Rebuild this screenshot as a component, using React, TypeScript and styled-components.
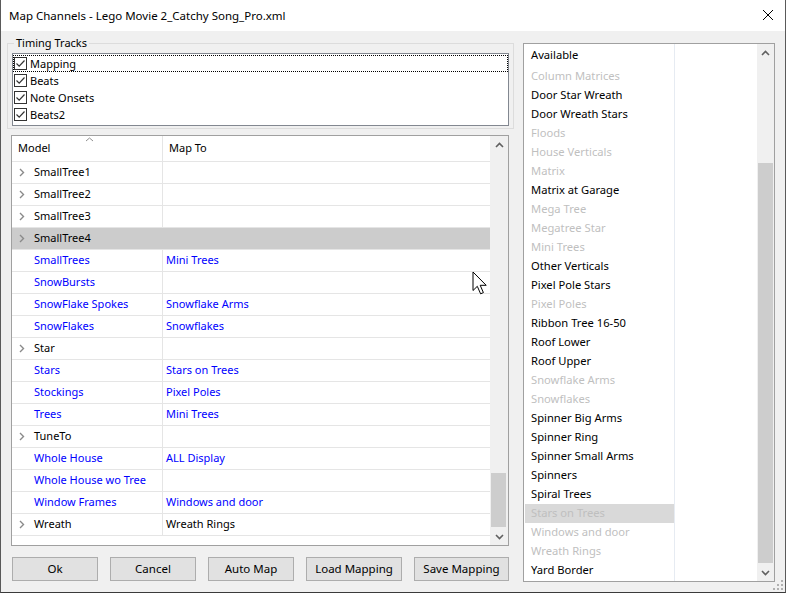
import React from "react";
import styled, { createGlobalStyle } from "styled-components";

const FONT = `"Noto Sans", "Segoe UI", sans-serif`;

const Global = createGlobalStyle`
  html, body { margin: 0; padding: 0; background: #f0f0f0; }
  body { font-family: ${FONT}; font-size: 11px; color: #000; }
  * { box-sizing: border-box; }
`;

const Window = styled.div`
  position: relative;
  width: 786px;
  height: 593px;
  background: #f0f0f0;
  display: flex;
  flex-direction: column;
  border-left: 1px solid #5a5a5a;
  border-right: 1px solid #5a5a5a;
  border-bottom: 1px solid #3a3a3a;
  overflow: hidden;
`;

const TitleBar = styled.div`
  height: 31px;
  flex: none;
  background: #fff;
  display: flex;
  align-items: center;
  justify-content: space-between;
  padding: 0 9px 1px 8px;
  font-size: 11.5px;
`;

const CloseBtn = styled.div`
  width: 12px;
  height: 12px;
  margin-right: 2px;
  display: flex;
`;

const Body = styled.div`
  flex: 1;
  display: flex;
  gap: 9px;
  padding-left: 6px;
`;

const LeftCol = styled.div`
  width: 507px;
  display: flex;
  flex-direction: column;
`;

const GroupBox = styled.div`
  position: relative;
  margin-top: 12px;
  height: 86px;
  border: 1px solid #dcdcdc;
  padding: 9px 4px 0 4px;
`;

const Legend = styled.span`
  position: absolute;
  top: -9px;
  left: 6px;
  padding: 0 2px;
  background: #f0f0f0;
  line-height: 16px;
  font-size: 11px;
`;

const TrackList = styled.div`
  height: 73px;
  background: #fff;
  border: 1px solid #828790;
  padding-top: 1px;
`;

const TrackRow = styled.div<{ $focus?: boolean }>`
  height: 17px;
  display: flex;
  align-items: center;
  gap: 3px;
  padding-left: 1px;
  outline: ${(p) => (p.$focus ? "1px dotted #000" : "none")};
  outline-offset: -1px;
`;

const CheckBox = styled.span`
  width: 13px;
  height: 13px;
  border: 1px solid #333;
  background: #fff;
  display: flex;
  align-items: center;
  justify-content: center;
  flex: none;
`;

const Table = styled.div`
  margin: 6px 0 0 4px;
  width: 498px;
  height: 411px;
  border: 1px solid #a0a0a0;
  background: #fff;
  display: flex;
  overflow: hidden;
`;

const TableMain = styled.div`
  width: 478px;
  display: flex;
  flex-direction: column;
`;

const HeaderRow = styled.div`
  position: relative;
  height: 26px;
  display: grid;
  grid-template-columns: 151px 1fr;
  border-bottom: 1px solid #e5e5e5;
  flex: none;
`;

const HeaderCell = styled.div<{ $pad: number; $divider?: boolean }>`
  display: flex;
  align-items: center;
  padding-left: ${(p) => p.$pad}px;
  padding-bottom: 2px;
  border-right: ${(p) => (p.$divider ? "1px solid #e5e5e5" : "none")};
`;

const SortArrow = styled.span`
  position: absolute;
  left: 73px;
  top: 1px;
  display: flex;
`;

const Row = styled.div<{ $selected?: boolean }>`
  height: 22px;
  display: grid;
  grid-template-columns: 151px 1fr;
  border-bottom: 1px solid #e5e5e5;
  background: ${(p) => (p.$selected ? "#cccccc" : "#fff")};
  flex: none;
`;

const Cell = styled.div<{ $pad: number; $blue?: boolean; $divider?: boolean }>`
  position: relative;
  display: flex;
  align-items: center;
  padding-left: ${(p) => p.$pad}px;
  padding-bottom: 2px;
  color: ${(p) => (p.$blue ? "#0000ff" : "#000")};
  border-right: ${(p) => (p.$divider ? "1px solid #e5e5e5" : "none")};
  white-space: nowrap;
`;

const Expander = styled.span`
  position: absolute;
  left: 7px;
  top: 6px;
  display: flex;
`;

const VScroll = styled.div<{ $thumbTop: number; $thumbHeight: number; $thumbWidth: number }>`
  position: relative;
  flex: 1;
  background: #f0f0f0;
  display: flex;
  flex-direction: column;
  justify-content: space-between;
  align-items: center;
  &::after {
    content: "";
    position: absolute;
    left: 1px;
    width: ${(p) => p.$thumbWidth}px;
    top: ${(p) => p.$thumbTop}px;
    height: ${(p) => p.$thumbHeight}px;
    background: #cdcdcd;
  }
`;

const ArrowBox = styled.div`
  height: 17px;
  display: flex;
  align-items: center;
  justify-content: center;
  width: 100%;
  position: relative;
  z-index: 1;
`;

const ButtonRow = styled.div`
  margin: 11px 0 0 5px;
  display: flex;
  gap: 12px;
`;

const Button = styled.div<{ $w: number }>`
  width: ${(p) => p.$w}px;
  height: 24px;
  background: #e1e1e1;
  border: 1px solid #adadad;
  display: flex;
  align-items: center;
  justify-content: center;
  font-size: 11.5px;
  padding-bottom: 1px;
`;

const RightList = styled.div`
  margin-top: 12px;
  width: 252px;
  height: 539px;
  border: 1px solid #a0a0a0;
  background: #fff;
  display: flex;
`;

const ListContent = styled.div`
  width: 233px;
  display: flex;
`;

const ListColumn = styled.div`
  width: 151px;
  border-right: 1px solid #e6ebf2;
  padding-left: 1px;
  display: flex;
  flex-direction: column;
`;

const ListHeader = styled.div`
  height: 23px;
  display: flex;
  align-items: center;
  padding: 0 0 2px 6px;
  font-size: 11.2px;
`;

const ListItem = styled.div<{ $disabled?: boolean; $selected?: boolean }>`
  height: 19px;
  display: flex;
  align-items: center;
  padding: 0 0 2px 6px;
  font-size: 11.2px;
  white-space: nowrap;
  color: ${(p) => (p.$disabled ? "#bfbfbf" : "#000")};
  background: ${(p) => (p.$selected ? "#d9d9d9" : "transparent")};
`;

const Cursor = styled.svg`
  position: absolute;
  left: 471px;
  top: 271px;
`;

const Grip = styled.svg`
  position: absolute;
  right: 2px;
  bottom: 2px;
`;

const Check = () => (
  <svg width="11" height="11" viewBox="0 0 11 11">
    <path d="M1.5 5.5 L4.2 8.2 L9.5 2.5" fill="none" stroke="#333" strokeWidth="1.2" />
  </svg>
);

const Chevron = () => (
  <svg width="6" height="9" viewBox="0 0 6 9">
    <path d="M1 1 L4.5 4.5 L1 8" fill="none" stroke="#8a8a8a" strokeWidth="1.4" />
  </svg>
);

const ArrowUp = () => (
  <svg width="9" height="6" viewBox="0 0 9 6">
    <path d="M1 5 L4.5 1.5 L8 5" fill="none" stroke="#606060" strokeWidth="1.6" />
  </svg>
);

const ArrowDown = () => (
  <svg width="9" height="6" viewBox="0 0 9 6">
    <path d="M1 1 L4.5 4.5 L8 1" fill="none" stroke="#606060" strokeWidth="1.6" />
  </svg>
);

type MapRow = { model: string; to: string; expand?: boolean; blue?: boolean; selected?: boolean };

const rows: MapRow[] = [
  { model: "SmallTree1", to: "", expand: true },
  { model: "SmallTree2", to: "", expand: true },
  { model: "SmallTree3", to: "", expand: true },
  { model: "SmallTree4", to: "", expand: true, selected: true },
  { model: "SmallTrees", to: "Mini Trees", blue: true },
  { model: "SnowBursts", to: "", blue: true },
  { model: "SnowFlake Spokes", to: "Snowflake Arms", blue: true },
  { model: "SnowFlakes", to: "Snowflakes", blue: true },
  { model: "Star", to: "", expand: true },
  { model: "Stars", to: "Stars on Trees", blue: true },
  { model: "Stockings", to: "Pixel Poles", blue: true },
  { model: "Trees", to: "Mini Trees", blue: true },
  { model: "TuneTo", to: "", expand: true },
  { model: "Whole House", to: "ALL Display", blue: true },
  { model: "Whole House wo Tree", to: "", blue: true },
  { model: "Window Frames", to: "Windows and door", blue: true },
  { model: "Wreath", to: "Wreath Rings", expand: true },
];

const available: [string, boolean][] = [
  ["Column Matrices", false],
  ["Door Star Wreath", true],
  ["Door Wreath Stars", true],
  ["Floods", false],
  ["House Verticals", false],
  ["Matrix", false],
  ["Matrix at Garage", true],
  ["Mega Tree", false],
  ["Megatree Star", false],
  ["Mini Trees", false],
  ["Other Verticals", true],
  ["Pixel Pole Stars", true],
  ["Pixel Poles", false],
  ["Ribbon Tree 16-50", true],
  ["Roof Lower", true],
  ["Roof Upper", true],
  ["Snowflake Arms", false],
  ["Snowflakes", false],
  ["Spinner Big Arms", true],
  ["Spinner Ring", true],
  ["Spinner Small Arms", true],
  ["Spinners", true],
  ["Spiral Trees", true],
  ["Stars on Trees", false],
  ["Windows and door", false],
  ["Wreath Rings", false],
  ["Yard Border", true],
];

const tracks = ["Mapping", "Beats", "Note Onsets", "Beats2"];

const buttons: [string, number][] = [
  ["Ok", 86],
  ["Cancel", 86],
  ["Auto Map", 86],
  ["Load Mapping", 96],
  ["Save Mapping", 95],
];

export default function App() {
  return (
    <>
      <Global />
      <Window>
        <TitleBar>
          <span>Map Channels - Lego Movie 2_Catchy Song_Pro.xml</span>
          <CloseBtn>
            <svg width="12" height="12" viewBox="0 0 12 12">
              <path d="M1 1 L11 11 M11 1 L1 11" stroke="#000" strokeWidth="1" />
            </svg>
          </CloseBtn>
        </TitleBar>
        <Body>
          <LeftCol>
            <GroupBox>
              <Legend>Timing Tracks</Legend>
              <TrackList>
                {tracks.map((t, i) => (
                  <TrackRow key={t} $focus={i === 0}>
                    <CheckBox>
                      <Check />
                    </CheckBox>
                    <span>{t}</span>
                  </TrackRow>
                ))}
              </TrackList>
            </GroupBox>
            <Table>
              <TableMain>
                <HeaderRow>
                  <HeaderCell $pad={6} $divider>Model</HeaderCell>
                  <HeaderCell $pad={6}>Map To</HeaderCell>
                  <SortArrow>
                    <svg width="9" height="5" viewBox="0 0 9 5">
                      <path d="M1 4 L4.5 1 L8 4" fill="none" stroke="#909090" strokeWidth="1" />
                    </svg>
                  </SortArrow>
                </HeaderRow>
                {rows.map((r) => (
                  <Row key={r.model} $selected={r.selected}>
                    <Cell $pad={22} $blue={r.blue} $divider={!r.selected}>
                      {r.expand && (
                        <Expander>
                          <Chevron />
                        </Expander>
                      )}
                      {r.model}
                    </Cell>
                    <Cell $pad={3} $blue={r.blue}>
                      {r.to}
                    </Cell>
                  </Row>
                ))}
              </TableMain>
              <VScroll $thumbTop={337} $thumbHeight={54} $thumbWidth={15}>
                <ArrowBox>
                  <ArrowUp />
                </ArrowBox>
                <ArrowBox>
                  <ArrowDown />
                </ArrowBox>
              </VScroll>
            </Table>
            <ButtonRow>
              {buttons.map(([label, w]) => (
                <Button key={label} $w={w}>
                  {label}
                </Button>
              ))}
            </ButtonRow>
          </LeftCol>
          <RightList>
            <ListContent>
              <ListColumn>
                <ListHeader>Available</ListHeader>
                {available.map(([name, enabled]) => (
                  <ListItem key={name} $disabled={!enabled} $selected={name === "Stars on Trees"}>
                    {name}
                  </ListItem>
                ))}
              </ListColumn>
            </ListContent>
            <VScroll $thumbTop={119} $thumbHeight={400} $thumbWidth={15}>
              <ArrowBox>
                <ArrowUp />
              </ArrowBox>
              <ArrowBox>
                <ArrowDown />
              </ArrowBox>
            </VScroll>
          </RightList>
        </Body>
        <Cursor width="16" height="25" viewBox="0 0 16 25">
          <path
            d="M1 1 L1 19.5 L5.3 15.3 L8.6 22.8 L11.4 21.6 L8.2 14.3 L14.2 14.3 Z"
            fill="#fff"
            stroke="#000"
            strokeWidth="1"
            strokeLinejoin="miter"
          />
        </Cursor>
        <Grip width="10" height="10" viewBox="0 0 10 10">
          <g fill="#b0b0b0">
            <rect x="8" y="0" width="2" height="2" />
            <rect x="4" y="4" width="2" height="2" />
            <rect x="8" y="4" width="2" height="2" />
            <rect x="0" y="8" width="2" height="2" />
            <rect x="4" y="8" width="2" height="2" />
            <rect x="8" y="8" width="2" height="2" />
          </g>
        </Grip>
      </Window>
    </>
  );
}
